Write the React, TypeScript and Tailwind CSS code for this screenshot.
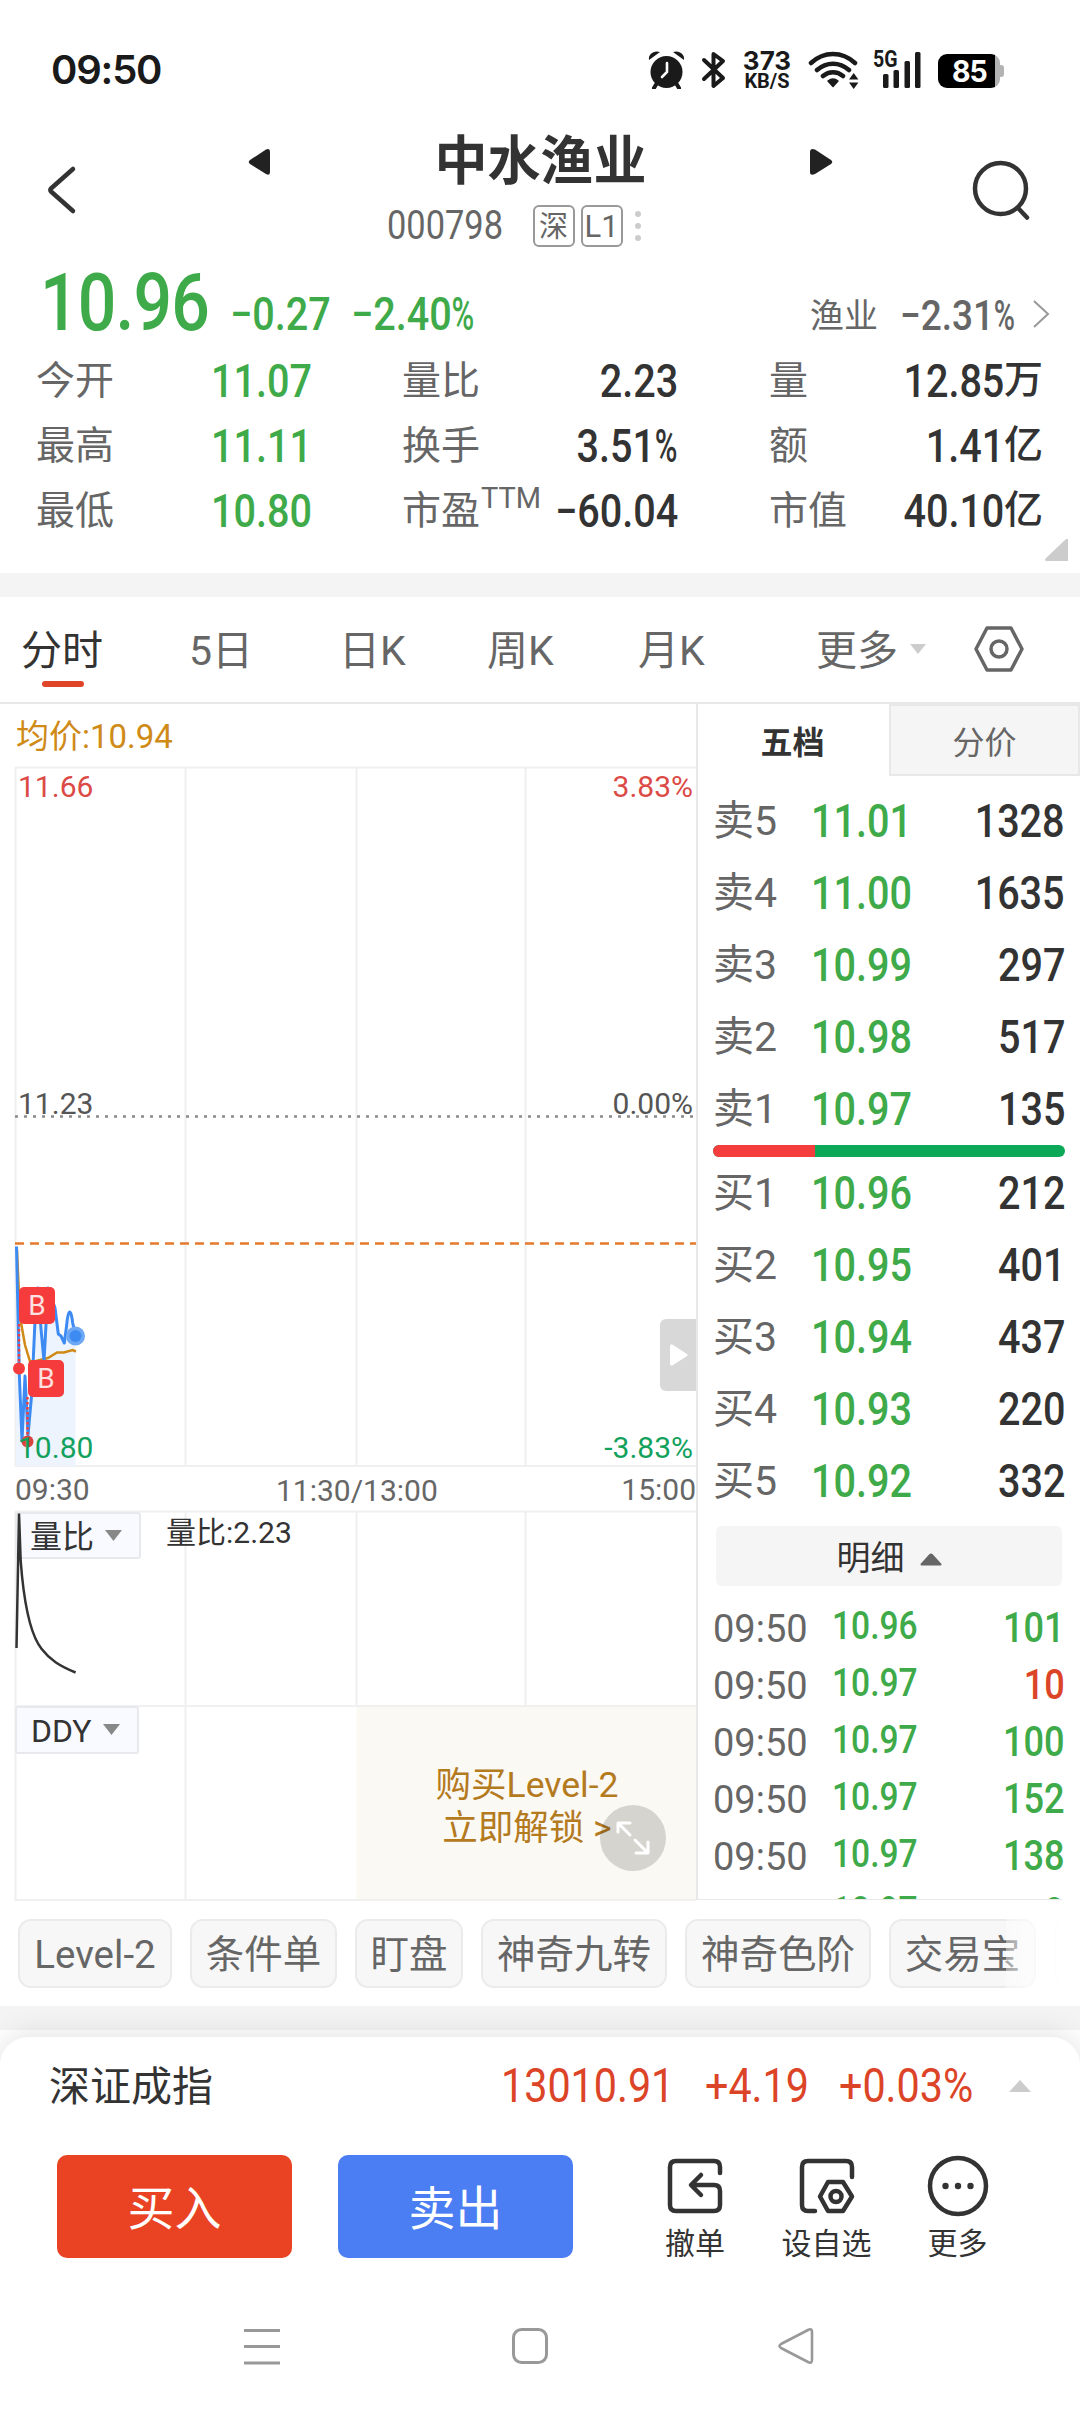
import React from "react";

type NumProps = { children: React.ReactNode; className?: string };

// Condensed figures, anchored left or right
const NumL: React.FC<NumProps> = ({ children, className = "" }) => (
  <span className={`inline-block origin-left scale-x-[.86] font-medium whitespace-nowrap leading-none ${className}`}>
    {children}
  </span>
);

const NumR: React.FC<NumProps> = ({ children, className = "" }) => (
  <span className={`inline-block origin-right scale-x-[.86] font-medium whitespace-nowrap leading-none ${className}`}>
    {children}
  </span>
);

const Pct: React.FC = () => <span className="-mr-[.16em] inline-block origin-left scale-x-[.78]">%</span>;

const asks = [
  ["卖5", "11.01", "1328"],
  ["卖4", "11.00", "1635"],
  ["卖3", "10.99", "297"],
  ["卖2", "10.98", "517"],
  ["卖1", "10.97", "135"],
];

const bids = [
  ["买1", "10.96", "212"],
  ["买2", "10.95", "401"],
  ["买3", "10.94", "437"],
  ["买4", "10.93", "220"],
  ["买5", "10.92", "332"],
];

const ticks = [
  { time: "09:50", price: "10.96", qty: "101", up: false },
  { time: "09:50", price: "10.97", qty: "10", up: true },
  { time: "09:50", price: "10.97", qty: "100", up: false },
  { time: "09:50", price: "10.97", qty: "152", up: false },
  { time: "09:50", price: "10.97", qty: "138", up: false },
  { time: "09:50", price: "10.97", qty: "9", up: false },
];

const StatusBar: React.FC = () => (
  <div className="flex h-[115px] items-start pl-[51px] pt-[50px] text-[#1a1a1a]">
    <span className="w-[597px] font-['Inter'] text-[40px] font-semibold leading-[40px] tracking-[-1.2px]">09:50</span>
    {/* alarm */}
    <svg width="37" height="39" viewBox="0 0 37 39" fill="#1a1a1a">
      <circle cx="18.5" cy="22" r="16" />
      <path d="M1 10C0 4 6 0 12 2zM36 10C37 4 31 0 25 2z" />
      <path d="M9 33l-3 5M28 33l3 5" stroke="#1a1a1a" strokeWidth="4" strokeLinecap="round" />
      <path d="M19 13v9l-5 5" fill="none" stroke="#fff" strokeWidth="2.6" strokeLinecap="round" />
    </svg>
    {/* bluetooth */}
    <svg className="ml-[16px]" width="25" height="40" viewBox="0 0 25 40" fill="none" stroke="#1a1a1a" strokeWidth="4" strokeLinecap="round" strokeLinejoin="round">
      <path d="M3 10l19 18-9.500 8V4l9.500 7L3 29" />
    </svg>
    <div className="ml-[15px] flex w-[52px] flex-col items-center font-bold">
      <span className="font-['Inter'] text-[26px] leading-[22px]">373</span>
      <span className="text-[20px] leading-[18px]">KB/S</span>
    </div>
    {/* wifi */}
    <svg className="ml-[15px]" width="52" height="40" viewBox="0 0 52 40" fill="none" stroke="#1a1a1a" strokeWidth="4.500" strokeLinecap="round">
      <path d="M3 13C16 1 34 1 47 13M9 20C18.500 11.500 31.500 11.500 41 20M15 26C21 21 29 21 35 26" />
      <path d="M20 31c3-2.500 7-2.500 10 0l-5 5.500z" fill="#1a1a1a" strokeWidth="1.500" strokeLinejoin="round" />
      <path d="M41 29.500l4.700-6.500 4.700 6.500zM41 32.500l4.700 6.500 4.700-6.500z" fill="#1a1a1a" stroke="none" />
    </svg>
    {/* signal */}
    <div className="relative ml-[13px] h-[40px] w-[50px]">
      <span className="absolute left-0 top-[-1px] origin-left scale-x-[.85] text-[23px] font-bold leading-[21px]">5G</span>
      <svg width="50" height="40" viewBox="0 0 50 40" fill="#1a1a1a">
        <rect x="10" y="24" width="5.500" height="14" rx="1.500" />
        <rect x="20.500" y="20" width="5.500" height="18" rx="1.500" />
        <rect x="31.500" y="11" width="5.500" height="27" rx="1.500" />
        <rect x="42" y="2" width="5.500" height="36" rx="1.500" />
      </svg>
    </div>
    {/* battery */}
    <div className="ml-[15px] mt-[4px] flex items-center">
      <div className="flex h-[34px] w-[62px] items-center justify-center overflow-hidden rounded-[9px] bg-[linear-gradient(to_right,#000_57px,#b3b3b3_57px)] font-['Inter'] text-[30px] font-bold leading-none text-white">
        <span className="scale-x-[.95] tracking-[-1px]">85</span>
      </div>
      <div className="h-[12px] w-[4px] rounded-r-[3px] bg-[#b3b3b3]" />
    </div>
  </div>
);

const Header: React.FC = () => (
  <header className="flex h-[145px] items-start">
    <svg className="ml-[44px] mt-[48px]" width="36" height="54" viewBox="0 0 36 54" fill="none" stroke="#333" strokeWidth="4.500" strokeLinecap="round" strokeLinejoin="round">
      <path d="M29 6L7 25.500a2 2 0 0 0 0 3L29 48" />
    </svg>
    <svg className="ml-[168px] mt-[33px]" width="23" height="28" viewBox="0 0 23 28" fill="#222">
      <path d="M2 12L18 1.500Q22 0 22 4V24Q22 28 18 26L2 16Q-.5 14 2 12z" />
    </svg>
    <div className="flex w-[539px] flex-col items-center">
      <h1 className="mt-[20px] text-[53px] font-bold leading-[54px] text-[#333]">中水渔业</h1>
      <div className="mr-[54px] mt-[16px] flex h-[42px] items-center text-[#666]">
        <NumL className="w-[146px] text-[40px] !font-normal">000798</NumL>
        <span className="flex h-[42px] w-[42px] items-center justify-center rounded-[6px] border-2 border-[#999] pt-[2px] text-[29px] leading-none">深</span>
        <span className="ml-[6px] flex h-[42px] w-[42px] items-center justify-center rounded-[6px] border-2 border-[#999] text-[31px] leading-none">L1</span>
        <span className="ml-[12px] flex flex-col gap-[6px]">
          <i className="h-[6px] w-[6px] rounded-full bg-[#ccc]" />
          <i className="h-[6px] w-[6px] rounded-full bg-[#ccc]" />
          <i className="h-[6px] w-[6px] rounded-full bg-[#ccc]" />
        </span>
      </div>
    </div>
    <svg className="mt-[33px]" width="23" height="28" viewBox="0 0 23 28" fill="#222">
      <path d="M21 12L5 1.500Q0 0 0 4V24Q0 28 5 26L21 16Q23.500 14 21 12z" />
    </svg>
    <svg className="ml-[138px] mt-[43px]" width="62" height="64" viewBox="0 0 62 64" fill="none" stroke="#333" strokeWidth="4.500" strokeLinecap="round">
      <circle cx="29.500" cy="30.500" r="25.500" />
      <path d="M47 50l9 9.500" />
    </svg>
  </header>
);

const Quote: React.FC = () => (
  <section className="relative h-[313px]">
    <div className="flex h-[87px] items-start pl-[40px] text-[#3eaa49]">
      <NumL className="mt-[4px] w-[190px] text-[79px] tracking-[-1px]">10.96</NumL>
      <NumL className="mt-[31px] w-[121px] text-[46px]">−0.27</NumL>
      <NumL className="mt-[31px] w-[459px] text-[46px]">−2.40<Pct /></NumL>
      <span className="mt-[39px] w-[90px] text-[34px] leading-[34px] text-[#666]">渔业</span>
      <NumL className="mt-[34px] w-[132px] text-[43px] text-[#666]">−2.31<Pct /></NumL>
      <svg className="mt-[39px]" width="20" height="30" viewBox="0 0 20 30" fill="none" stroke="#999" strokeWidth="2">
        <path d="M2 2l14 13L2 28" />
      </svg>
    </div>
    <div className="grid grid-cols-[175px_191px_150px_126px_127px_1fr] grid-rows-[65px_65px_65px] items-center pl-[36px] pr-[37px] pt-[1px] text-[39px] leading-none text-[#666]">
      <span className="pt-[2px]">今开</span>
      <NumL className="text-[46px] text-[#3eaa49]">11.07</NumL>
      <span className="pt-[2px]">量比</span>
      <NumR className="justify-self-end text-[46px] text-[#333]">2.23</NumR>
      <span className="pl-[91px] pt-[2px]">量</span>
      <span className="flex items-center justify-self-end font-medium text-[#333]"><NumR className="text-[46px]">12.85</NumR>万</span>

      <span className="pt-[2px]">最高</span>
      <NumL className="text-[46px] text-[#3eaa49]">11.11</NumL>
      <span className="pt-[2px]">换手</span>
      <NumR className="justify-self-end text-[46px] text-[#333]">3.51<Pct /></NumR>
      <span className="pl-[91px] pt-[2px]">额</span>
      <span className="flex items-center justify-self-end font-medium text-[#333]"><NumR className="text-[46px]">1.41</NumR>亿</span>

      <span className="pt-[2px]">最低</span>
      <NumL className="text-[46px] text-[#3eaa49]">10.80</NumL>
      <span className="flex items-center whitespace-nowrap pt-[2px]">市盈<span className="mb-[26px] ml-[1px] text-[29px]">TTM</span></span>
      <NumR className="justify-self-end text-[46px] text-[#333]">−60.04</NumR>
      <span className="whitespace-nowrap pl-[91px] pt-[2px]">市值</span>
      <span className="flex items-center justify-self-end font-medium text-[#333]"><NumR className="text-[46px]">40.10</NumR>亿</span>
    </div>
    <svg className="absolute bottom-[12px] right-[12px]" width="23" height="22" viewBox="0 0 23 22" fill="#ccc">
      <path d="M23 0V22H1Q-1 21 1 19L20 1Q22 -1 23 0z" />
    </svg>
  </section>
);

const Periods: React.FC = () => (
  <nav className="flex h-[107px] items-center border-b-2 border-[#e8e8e8] pt-[3px] text-[41px] leading-none text-[#666]">
    <div className="relative ml-[21px] w-[168px] text-[#333]">
      分时
      <span className="absolute bottom-[-15px] left-[21px] h-[6px] w-[42px] rounded-full bg-[#e0452a]" />
    </div>
    <span className="w-[150px]">5日</span>
    <span className="w-[148px]">日K</span>
    <span className="w-[151px]">周K</span>
    <span className="w-[178px]">月K</span>
    <span className="w-[94px]">更多</span>
    <svg className="mb-[3px]" width="16" height="11" viewBox="0 0 16 11" fill="#ccc">
      <path d="M0 0h16L8 10z" />
    </svg>
    <svg className="mb-[5px] ml-[48px]" width="50" height="48" viewBox="0 0 50 48" fill="none" stroke="#666" strokeWidth="3.500" strokeLinejoin="round">
      <path d="M13 3H37L48 24 37 45H13L2 24z" />
      <circle cx="25" cy="24" r="8" />
    </svg>
  </nav>
);

const ChartPanel: React.FC = () => (
  <div className="relative w-[696px] text-[30px] leading-none">
    <div className="flex h-[62px] items-center pl-[16px] pt-[3px] text-[33px] text-[#cf8a17]">均价:10.94</div>
    {/* price / volume ratio / DDY panes */}
    <svg className="block" width="696" height="1136" viewBox="0 766 696 1136" fill="none">
      <path d="M356.500 1706H696V1900H356.500z" fill="#fbf9f4" />
      <g stroke="#f0f0f0" strokeWidth="2">
        <path d="M15 767.500H696M15 1466H696M15 1511.500H696M15 1706H696M15 1900H696" />
        <path d="M15.500 767V1466M15.500 1511V1901M185.500 767V1466M185.500 1511V1901M356.500 767V1466M356.500 1511V1706M525.500 767V1466M525.500 1511V1706" />
      </g>
      <path d="M15 1116.500H694" stroke="#8a8a8a" strokeWidth="2.500" strokeDasharray="3 6" />
      <path d="M15 1243.500H696" stroke="#e37a2c" strokeWidth="2.500" strokeDasharray="9 6" />
      <path d="M16 1247L19 1374 22 1441 25 1376 28 1435 32 1394 35 1321 38 1287H52L58 1334 64 1343 67 1325 70 1312 75.500 1335V1466H16z" fill="#edf4fe" />
      <path d="M17 1250L20 1317 25 1345 30 1361.500 36 1361 48 1358 57 1352.500 64 1352.500 72.500 1350 76 1351.500" stroke="#cf8a17" strokeWidth="2.500" />
      <path d="M16.500 1246.500L19.300 1374 22 1441 25 1376 28 1435 31.700 1394 35 1321 38 1288 41 1329 44 1361 46 1325 48 1288 55 1308 58.300 1334 61 1336 64.300 1343 66.700 1325C68 1308 71 1308 72.700 1323L75.600 1335" stroke="#3d8bf2" strokeWidth="3" strokeLinejoin="round" />
      <path d="M19 1324V1366M27.500 1397V1436" stroke="#f53d3d" strokeWidth="2.500" strokeDasharray="2.500 2.500" />
      <circle cx="19" cy="1368.500" r="6" fill="#f53d3d" />
      <circle cx="27.500" cy="1441.500" r="6" fill="#d8453f" />
      <circle cx="75.500" cy="1336" r="9.500" fill="#6ea8f5" />
      <circle cx="75.500" cy="1336" r="6" fill="#3d8bf2" />
    </svg>

    <span className="absolute left-[18px] top-[68px] text-[#dc4a46]">11.66</span>
    <span className="absolute right-[3px] top-[68px] text-[#dc4a46]">3.83%</span>
    <span className="absolute left-[18px] top-[385px] text-[#555]">11.23</span>
    <span className="absolute right-[3px] top-[385px] text-[#555]">0.00%</span>
    <span className="absolute left-[18px] top-[729px] text-[#12a15c]">10.80</span>
    <span className="absolute right-[3px] top-[729px] text-[#12a15c]">-3.83%</span>
    <span className="absolute left-[15px] top-[771px] text-[#666]">09:30</span>
    <span className="absolute left-[276px] top-[772px] text-[#666]">11:30/13:00</span>
    <span className="absolute right-0 top-[771px] text-[#666]">15:00</span>

    <span className="absolute left-[19px] top-[583px] flex h-[37px] w-[36px] items-center justify-center rounded-[5px] bg-[#f53b3b] text-[28px] text-[#fde0e0]">B</span>
    <span className="absolute left-[28px] top-[656px] flex h-[37px] w-[36px] items-center justify-center rounded-[5px] bg-[#f53b3b] text-[28px] text-[#fde0e0]">B</span>

    <span className="absolute right-0 top-[615px] flex h-[72px] w-[36px] items-center rounded-l-[6px] bg-[#d8d8d8] pl-[10px]">
      <svg width="18" height="22" viewBox="0 0 18 22" fill="#fff">
        <path d="M0 2Q1 -1 3 1L17 10Q18 11 17 12L3 21Q1 23 0 20z" />
      </svg>
    </span>

    <span className="absolute left-[15px] top-[808px] flex h-[47px] w-[126px] items-center rounded-[3px] border-2 border-[#e8e9ec] bg-[#f8faff] pl-[13px] pt-[3px] text-[32px] text-[#333]">
      量比
      <svg className="mb-[4px] ml-[11px]" width="17" height="11" viewBox="0 0 17 11" fill="#888"><path d="M0 0h17L8.500 11z" /></svg>
    </span>
    <span className="absolute left-[166px] top-[814px] text-[#333]">量比:2.23</span>
    <span className="absolute left-[15px] top-[1002px] flex h-[48px] w-[124px] items-center rounded-[3px] border-2 border-[#e8e9ec] bg-[#f8faff] pl-[14px] pt-[2px] text-[32px] text-[#333]">
      DDY
      <svg className="mb-[4px] ml-[11px]" width="17" height="11" viewBox="0 0 17 11" fill="#888"><path d="M0 0h17L8.500 11z" /></svg>
    </span>
    <svg className="absolute left-0 top-[806px]" width="90" height="166" viewBox="0 1510 90 166" fill="none" stroke="#333" strokeWidth="2.500">
      <path d="M16.500 1648L19 1513.500 20.700 1561 22 1576C27 1625 36 1642 41.700 1649 50 1660 60 1666 75.600 1672.500" />
    </svg>

    <div className="absolute left-[356px] top-[1060px] w-[342px] text-center text-[35.500px] leading-[43px] text-[#b47a1e]">
      <p>购买Level-2</p>
      <p>立即解锁 &gt;</p>
    </div>
    <span className="absolute left-[600px] top-[1101px] flex h-[66px] w-[66px] items-center justify-center rounded-full bg-black/15">
      <svg width="36" height="36" viewBox="0 0 36 36" fill="none" stroke="#fff" strokeWidth="3" strokeLinecap="round" strokeLinejoin="round">
        <path d="M3 12V3H15M3 3L15 15M20 20L33 33M33 22V33H21" />
      </svg>
    </span>
  </div>
);

const BookRow: React.FC<{ row: string[] }> = ({ row }) => (
  <div className="flex h-[72px] items-center pl-[15px] pr-[15px] text-[46px] leading-none text-[#333]">
    <span className="w-[98px] pt-[1px] text-[41px] text-[#666]">{row[0]}</span>
    <NumL className="text-[#3eaa49]">{row[1]}</NumL>
    <NumR className="ml-auto">{row[2]}</NumR>
  </div>
);

const OrderBook: React.FC = () => (
  <aside className="h-[1196px] w-[384px] overflow-hidden border-l-2 border-[#e8e8e8] bg-white">
    <div className="flex h-[72px] text-[32px] leading-none">
      <span className="flex w-[189px] items-center justify-center pt-[5px] font-bold text-[#333]">五档</span>
      <span className="ml-[2px] flex flex-1 items-center justify-center border-2 border-[#e8e8e8] bg-[#f5f5f5] pt-[5px] text-[#666]">分价</span>
    </div>
    <div className="mt-[9px]">
      {asks.map((row) => (
        <BookRow key={row[0]} row={row} />
      ))}
    </div>
    <div className="ml-[15px] flex h-[12px] w-[352px] overflow-hidden rounded-full bg-[#0ba858]">
      <span className="w-[102px] bg-[#f53d3d]" />
    </div>
    <div>
      {bids.map((row) => (
        <BookRow key={row[0]} row={row} />
      ))}
    </div>
    <div className="ml-[18px] mt-[9px] flex h-[60px] w-[346px] items-center justify-center rounded-[6px] bg-[#f5f5f5] pt-[3px] text-[34px] leading-none text-[#333]">
      明细
      <svg className="ml-[15px] mt-[3px]" width="22" height="13" viewBox="0 0 22 13" fill="#666">
        <path d="M9.500 1Q11 0 12.500 1L21.500 11Q22 12.500 20 12.500H2Q0 12.500 .5 11z" />
      </svg>
    </div>
    <div className="mt-[13px] h-[300px] overflow-hidden">
      {ticks.map((t, i) => (
        <div key={i} className="flex h-[57px] items-center pl-[15px] pr-[15px] leading-none">
          <span className="w-[119px] pt-[2px] text-[38px] text-[#666]">{t.time}</span>
          <NumL className="mt-[-3px] text-[39px] text-[#3eaa49]">{t.price}</NumL>
          <NumR className={t.up ? "ml-auto text-[42px] text-[#dc4428]" : "ml-auto text-[42px] text-[#3eaa49]"}>{t.qty}</NumR>
        </div>
      ))}
    </div>
    <div className="h-[2px] w-[364px] bg-[#e8e8e8]" />
  </aside>
);

const chip =
  "flex h-[69px] shrink-0 items-center justify-center rounded-[13px] border-2 border-[#ebebeb] bg-[#f7f7f7] pt-[4px] text-[38.5px] leading-none text-[#666]";

const Tools: React.FC = () => (
  <div className="relative flex h-[106px] w-[1062px] gap-[18px] overflow-hidden pl-[18px] pt-[19px]">
    <span className={`${chip} w-[154px]`}>Level-2</span>
    <span className={`${chip} w-[147px]`}>条件单</span>
    <span className={`${chip} w-[108px]`}>盯盘</span>
    <span className={`${chip} w-[186px]`}>神奇九转</span>
    <span className={`${chip} w-[186px]`}>神奇色阶</span>
    <span className={`${chip} w-[147px]`}>交易宝</span>
    <span className={`${chip} w-[147px]`} />
    <span className="absolute right-0 top-0 h-full w-[56px] bg-gradient-to-r from-white/40 to-white" />
  </div>
);

const TradeBar: React.FC = () => (
  <footer className="relative h-[375px] rounded-t-[28px] bg-white text-[#333] shadow-[0_-2px_30px_rgba(0,0,0,0.12)]">
    <div className="flex h-[98px] items-center pl-[49px] leading-none text-[#dc4428]">
      <span className="w-[452px] pt-[3px] text-[41px] text-[#333]">深证成指</span>
      <NumL className="w-[204px] text-[48px] !font-normal">13010.91</NumL>
      <NumL className="w-[134px] text-[48px] !font-normal">+4.19</NumL>
      <NumL className="w-[170px] text-[48px] !font-normal">+0.03%</NumL>
      <svg width="22" height="13" viewBox="0 0 22 13" fill="#ccc"><path d="M11 0L22 12H0z" /></svg>
    </div>
    <div className="mt-[20px] flex items-start pl-[57px]">
      <button className="h-[103px] w-[235px] rounded-[10px] bg-[#e94324] pt-[4px] text-[47px] leading-none text-white">买入</button>
      <button className="ml-[46px] h-[103px] w-[235px] rounded-[10px] bg-[#4b7ef2] pt-[4px] text-[47px] leading-none text-white">卖出</button>
      <div className="ml-[56px] flex text-[30px] leading-none">
        <div className="flex w-[132px] flex-col items-center">
          <svg width="60" height="62" viewBox="0 0 60 62" fill="none" stroke="#333" strokeWidth="4.500" strokeLinecap="round" strokeLinejoin="round">
            <path d="M55 18V12Q55 6 49 6H11Q5 6 5 12V50Q5 56 11 56H49Q55 56 55 50V36Q55 30 49 30H27M36 20L26 30 36 40" />
          </svg>
          <span className="mt-[12px]">撤单</span>
        </div>
        <div className="flex w-[131px] flex-col items-center">
          <svg width="60" height="62" viewBox="0 0 60 62" fill="none" stroke="#333" strokeWidth="4.500" strokeLinecap="round" strokeLinejoin="round">
            <path d="M55 22V12Q55 6 49 6H11Q5 6 5 12V50Q5 56 11 56H18" />
            <path d="M31 27H46L55 41.500 46 56H31L23 41.500z" />
            <circle cx="39" cy="41.500" r="5.500" />
          </svg>
          <span className="mt-[12px]">设自选</span>
        </div>
        <div className="flex w-[131px] flex-col items-center">
          <svg width="62" height="62" viewBox="0 0 62 62" fill="none" stroke="#333" strokeWidth="4.500">
            <circle cx="31" cy="31" r="28" />
            <g fill="#333" stroke="none">
              <circle cx="18.500" cy="31" r="3.200" />
              <circle cx="31" cy="31" r="3.200" />
              <circle cx="43.500" cy="31" r="3.200" />
            </g>
          </svg>
          <span className="mt-[12px]">更多</span>
        </div>
      </div>
    </div>
    {/* system navigation */}
    <div className="mt-[67px] flex pl-[242px]">
      <svg width="40" height="40" viewBox="0 0 40 40" stroke="#999" strokeWidth="3"><path d="M2 4.500H38M2 20.500H38M2 37H38" /></svg>
      <svg className="ml-[228px]" width="40" height="40" viewBox="0 0 40 40" fill="none" stroke="#999" strokeWidth="3"><rect x="3.500" y="3.500" width="33" height="33" rx="8" /></svg>
      <svg className="ml-[226px]" width="40" height="40" viewBox="0 0 40 40" fill="none" stroke="#999" strokeWidth="2.600" strokeLinejoin="round"><path d="M32 4Q36 2 36 6V34Q36 38 32 36L5 22Q2 20 5 18z" /></svg>
    </div>
  </footer>
);

const App: React.FC = () => {
  return (
    <div className="h-[2412px] w-[1080px] overflow-hidden bg-white font-['Roboto','Noto_Sans_CJK_SC',sans-serif]">
      <StatusBar />
      <Header />
      <Quote />
      <div className="h-[24px] bg-[#f4f4f4]" />
      <Periods />
      <main className="flex h-[1196px]">
        <ChartPanel />
        <OrderBook />
      </main>
      <Tools />
      <div className="h-[24px] bg-[#f4f4f4]" />
      <div className="h-[7px] bg-white" />
      <TradeBar />
    </div>
  );
};

export default App;
